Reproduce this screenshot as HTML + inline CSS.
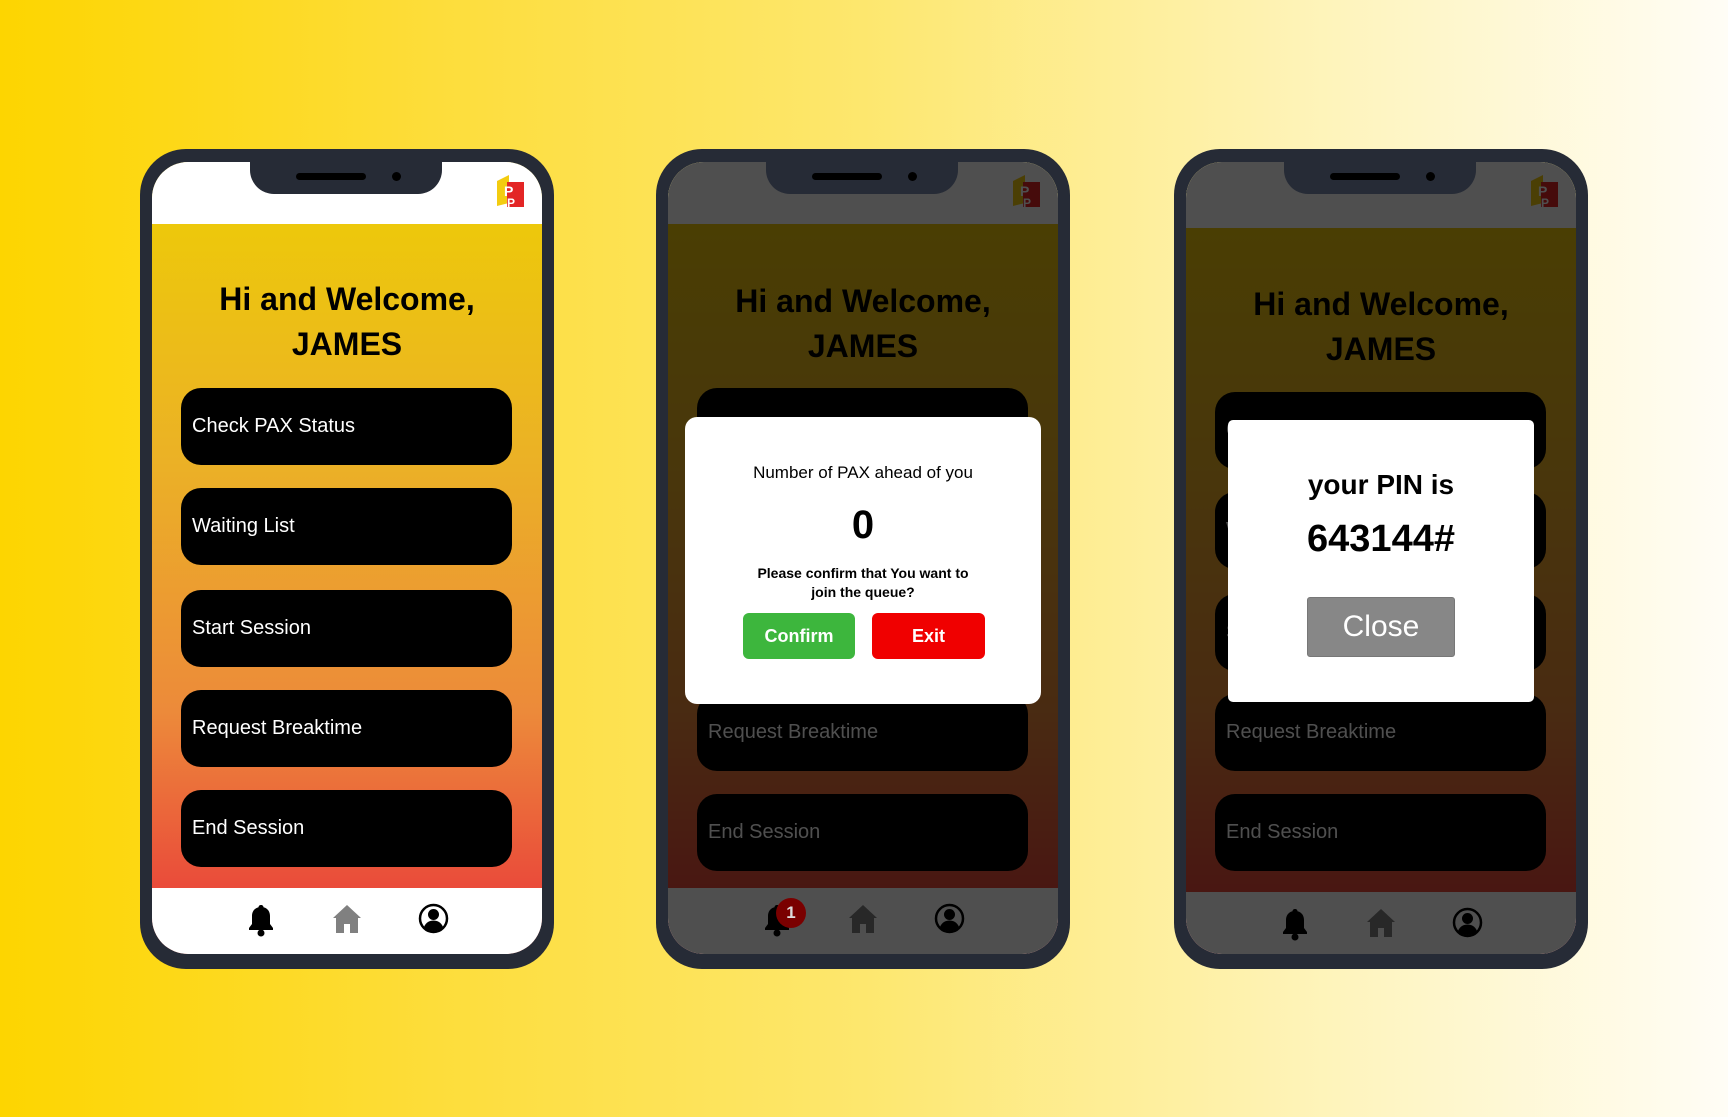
<!DOCTYPE html>
<html><head><meta charset="utf-8"><style>
*{margin:0;padding:0;box-sizing:border-box}
body{width:1728px;height:1117px;overflow:hidden;position:relative;font-family:"Liberation Sans",sans-serif;
background:linear-gradient(90deg,#fdd500 0%,#fddd3a 25%,#fde76e 50%,#fef3b6 75%,#fffdf6 100%)}
.phone{position:absolute;top:149px;width:414px;height:820px;background:#262b36;border-radius:46px}
.screen{position:absolute;left:12px;top:13px;width:390px;height:792px;border-radius:36px;overflow:hidden;
background:linear-gradient(180deg,#edca0a 0px,#edc80b 62px,#ebb126 300px,#ec8a3a 550px,#ea4b3a 726px)}
.hdr{position:absolute;left:0;top:0;width:100%;height:62px;background:#fff}
.notch{position:absolute;left:98px;top:-13px;width:192px;height:45px;background:#262b36;border-radius:0 0 24px 24px}
.spk{position:absolute;left:46px;top:24px;width:70px;height:7px;border-radius:4px;background:#000}
.cam{position:absolute;left:142px;top:23px;width:9px;height:9px;border-radius:50%;background:#000}
.logo{position:absolute;left:343px;top:11px;width:30px;height:37px}
.title{position:absolute;left:0;top:115px;width:100%;text-align:center;font-weight:bold;font-size:32px;line-height:45px;color:#000}
.btn{position:absolute;left:29px;width:331px;height:77px;background:#000;border-radius:20px;color:#fff;font-size:20px;padding-left:11px;line-height:77px}
.nav{position:absolute;left:0;top:726px;width:100%;height:66px;background:#fff}
.ic{position:absolute;top:15px}
.ov{position:absolute;inset:0;background:rgba(0,0,0,0.69)}
.dlg{position:absolute;background:#fff;text-align:center;color:#000}
</style></head><body>

<div class="phone" style="left:140px">
 <div class="screen">
  <div class="hdr"></div>
  <div class="notch"><div class="spk"></div><div class="cam"></div></div>
  <svg class="logo" viewBox="0 0 30 37"><path d="M2 8 L14 2 L14 30 L2 33Z" fill="#f3cc10"/><rect x="12" y="9" width="17" height="25" fill="#e32525"/><text x="9" y="23" font-size="14" font-weight="bold" fill="#fff" font-family="Liberation Sans">P</text><text x="12" y="34" font-size="12" font-weight="bold" fill="#fff" font-family="Liberation Sans">P</text></svg>
  <div class="title">Hi and Welcome,<br>JAMES</div>
  <div class="btn" style="top:226px">Check PAX Status</div>
  <div class="btn" style="top:326px">Waiting List</div>
  <div class="btn" style="top:428px">Start Session</div>
  <div class="btn" style="top:528px">Request Breaktime</div>
  <div class="btn" style="top:628px">End Session</div>
  <div class="nav">
   <svg class="ic" style="left:95px" width="28" height="34" viewBox="0 0 28 34"><path d="M14 2c-1.5 0-2.5 1-2.5 2.3C7 5.5 5 9 5 13v8l-3 4v2h24v-2l-3-4v-8c0-4-2-7.5-6.5-8.7C16.5 3 15.5 2 14 2z" fill="#000"/><circle cx="14" cy="30" r="3.5" fill="#000"/></svg>
   <svg class="ic" style="left:180px" width="30" height="32" viewBox="0 0 30 32"><path d="M15 2 L1 15 L4 15 L4 30 L12 30 L12 21 L18 21 L18 30 L26 30 L26 15 L29 15Z" fill="#808080"/></svg>
   <svg class="ic" style="left:266px" width="31" height="31" viewBox="0 0 31 31"><circle cx="15.5" cy="15.5" r="13.5" fill="none" stroke="#000" stroke-width="2.5"/><circle cx="15.5" cy="11.5" r="5.5" fill="#000"/><path d="M6 24c2-5 6-6.5 9.5-6.5S23 19 25 24c-2.5 2.5-6 4-9.5 4S8.5 26.5 6 24z" fill="#000"/></svg>
  </div>
 </div>
</div>

<div class="phone" style="left:656px">
 <div class="screen">
  <div class="hdr"></div>
  <svg class="logo" viewBox="0 0 30 37"><path d="M2 8 L14 2 L14 30 L2 33Z" fill="#f3cc10"/><rect x="12" y="9" width="17" height="25" fill="#e32525"/><text x="9" y="23" font-size="14" font-weight="bold" fill="#fff" font-family="Liberation Sans">P</text><text x="12" y="34" font-size="12" font-weight="bold" fill="#fff" font-family="Liberation Sans">P</text></svg>
  <div class="title" style="top:117px">Hi and Welcome,<br>JAMES</div>
  <div class="btn" style="top:226px">Check PAX Status</div>
  <div class="btn" style="top:326px">Waiting List</div>
  <div class="btn" style="top:428px">Start Session</div>
  <div class="btn" style="top:532px">Request Breaktime</div>
  <div class="btn" style="top:632px">End Session</div>
  <div class="nav">
   <svg class="ic" style="left:95px" width="28" height="34" viewBox="0 0 28 34"><path d="M14 2c-1.5 0-2.5 1-2.5 2.3C7 5.5 5 9 5 13v8l-3 4v2h24v-2l-3-4v-8c0-4-2-7.5-6.5-8.7C16.5 3 15.5 2 14 2z" fill="#000"/><circle cx="14" cy="30" r="3.5" fill="#000"/></svg>
   <svg class="ic" style="left:180px" width="30" height="32" viewBox="0 0 30 32"><path d="M15 2 L1 15 L4 15 L4 30 L12 30 L12 21 L18 21 L18 30 L26 30 L26 15 L29 15Z" fill="#808080"/></svg>
   <svg class="ic" style="left:266px" width="31" height="31" viewBox="0 0 31 31"><circle cx="15.5" cy="15.5" r="13.5" fill="none" stroke="#000" stroke-width="2.5"/><circle cx="15.5" cy="11.5" r="5.5" fill="#000"/><path d="M6 24c2-5 6-6.5 9.5-6.5S23 19 25 24c-2.5 2.5-6 4-9.5 4S8.5 26.5 6 24z" fill="#000"/></svg>
  </div>
  <div class="ov"></div>
  <div style="position:absolute;left:108px;top:736px;width:30px;height:30px;border-radius:50%;background:#7a0000;color:#ddd;font-size:17px;font-weight:bold;text-align:center;line-height:30px">1</div>
  <div class="dlg" style="left:17px;top:255px;width:356px;height:287px;border-radius:12px">
   <div style="position:absolute;top:46px;width:100%;font-size:17px">Number of PAX ahead of you</div>
   <div style="position:absolute;top:86px;width:100%;font-size:40px;font-weight:bold">0</div>
   <div style="position:absolute;top:147px;width:100%;font-size:14px;font-weight:bold;line-height:19px">Please confirm that You want to<br>join the queue?</div>
   <div style="position:absolute;left:58px;top:196px;width:112px;height:46px;background:#3db63d;border-radius:6px;color:#fff;font-weight:bold;font-size:18px;line-height:46px">Confirm</div>
   <div style="position:absolute;left:187px;top:196px;width:113px;height:46px;background:#f00000;border-radius:6px;color:#fff;font-weight:bold;font-size:18px;line-height:46px">Exit</div>
  </div>
  <div class="notch"><div class="spk"></div><div class="cam"></div></div>
 </div>
</div>

<div class="phone" style="left:1174px">
 <div class="screen">
  <div class="hdr" style="height:66px"></div>
  <svg class="logo" viewBox="0 0 30 37"><path d="M2 8 L14 2 L14 30 L2 33Z" fill="#f3cc10"/><rect x="12" y="9" width="17" height="25" fill="#e32525"/><text x="9" y="23" font-size="14" font-weight="bold" fill="#fff" font-family="Liberation Sans">P</text><text x="12" y="34" font-size="12" font-weight="bold" fill="#fff" font-family="Liberation Sans">P</text></svg>
  <div class="title" style="top:120px">Hi and Welcome,<br>JAMES</div>
  <div class="btn" style="top:230px">Check PAX Status</div>
  <div class="btn" style="top:330px">Waiting List</div>
  <div class="btn" style="top:432px">Start Session</div>
  <div class="btn" style="top:532px">Request Breaktime</div>
  <div class="btn" style="top:632px">End Session</div>
  <div class="nav" style="top:730px">
   <svg class="ic" style="left:95px" width="28" height="34" viewBox="0 0 28 34"><path d="M14 2c-1.5 0-2.5 1-2.5 2.3C7 5.5 5 9 5 13v8l-3 4v2h24v-2l-3-4v-8c0-4-2-7.5-6.5-8.7C16.5 3 15.5 2 14 2z" fill="#000"/><circle cx="14" cy="30" r="3.5" fill="#000"/></svg>
   <svg class="ic" style="left:180px" width="30" height="32" viewBox="0 0 30 32"><path d="M15 2 L1 15 L4 15 L4 30 L12 30 L12 21 L18 21 L18 30 L26 30 L26 15 L29 15Z" fill="#808080"/></svg>
   <svg class="ic" style="left:266px" width="31" height="31" viewBox="0 0 31 31"><circle cx="15.5" cy="15.5" r="13.5" fill="none" stroke="#000" stroke-width="2.5"/><circle cx="15.5" cy="11.5" r="5.5" fill="#000"/><path d="M6 24c2-5 6-6.5 9.5-6.5S23 19 25 24c-2.5 2.5-6 4-9.5 4S8.5 26.5 6 24z" fill="#000"/></svg>
  </div>
  <div class="ov"></div>
  <div class="dlg" style="left:42px;top:258px;width:306px;height:282px;border-radius:5px">
   <div style="position:absolute;top:49px;width:100%;font-size:28px;font-weight:bold">your PIN is</div>
   <div style="position:absolute;top:98px;width:100%;font-size:38px;font-weight:bold">643144#</div>
   <div style="position:absolute;left:79px;top:177px;width:148px;height:60px;background:#878787;border:1px solid #777;border-radius:3px;color:#fff;font-size:30px;line-height:58px">Close</div>
  </div>
  <div class="notch"><div class="spk"></div><div class="cam"></div></div>
 </div>
</div>
</body></html>
